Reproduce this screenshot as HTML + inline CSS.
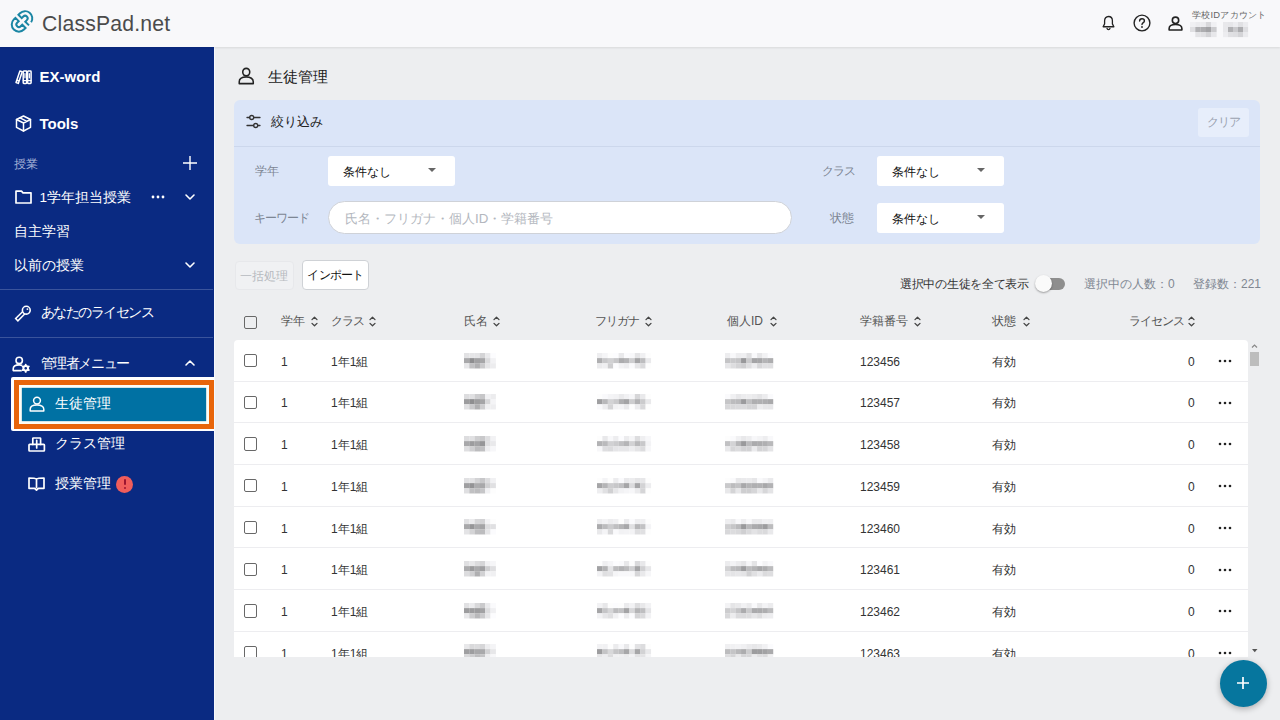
<!DOCTYPE html>
<html lang="ja">
<head>
<meta charset="utf-8">
<title>ClassPad.net</title>
<style>
*{box-sizing:border-box;margin:0;padding:0}
html,body{width:1280px;height:720px;overflow:hidden}
body{font-family:"Liberation Sans",sans-serif;background:#edeef0;color:#222;position:relative;font-size:12px}
.abs{position:absolute}
.t{position:absolute;white-space:nowrap;line-height:20px;height:20px}
svg{position:absolute;overflow:visible}
/* header */
#hdr{position:absolute;left:0;top:0;width:1280px;height:46.6px;background:#f8f8fa;box-shadow:0 1px 2px rgba(0,0,0,.09);z-index:5}
#logo{left:42px;top:10px;font-size:21.2px;line-height:28px;height:28px;color:#4b4b4b;letter-spacing:.2px}
/* sidebar */
#side{overflow:hidden;position:absolute;left:0;top:46px;width:213.6px;height:674px;background:#0a2a82;color:#fff;z-index:3}
#side .t{font-size:13.5px;color:#fff;margin-top:1px;margin-left:-.5px}
#side .b{font-weight:bold;font-size:15px}
.sdiv{position:absolute;left:0;width:213px;height:1px;background:#3a549c}
/* main */
#filter{position:absolute;left:234px;top:100px;width:1026px;height:144px;background:#dbe5f8;border-radius:6px}
.lbl{color:#7d8694;font-size:12px}
.sel{position:absolute;width:127px;height:30px;background:#fff;border-radius:3px}
.sel span{position:absolute;left:15px;top:6px;line-height:20px;font-size:12px;color:#111}
.sel i{position:absolute;left:100.3px;top:11.8px;border-left:4.2px solid transparent;border-right:4.2px solid transparent;border-top:4.6px solid #666}
.btn{position:absolute;height:30px;border-radius:4px;font-size:12px;line-height:28px;text-align:center}
.hd{color:#555;font-size:12px}
#tbl{position:absolute;left:234px;top:340px;width:1014px;height:317px;background:#fff;border-radius:4px 4px 0 0;overflow:hidden}
.row{position:absolute;left:0;width:1015px;height:41.7px;border-bottom:1px solid #ededf0}
.row .t{font-size:12px;color:#333;top:11.8px}
.cb{position:absolute;width:13.4px;height:13.4px;border:1.6px solid #686868;border-radius:2px;background:transparent}
.bl{position:absolute;height:12px;filter:blur(1.5px);background:#bbb}
</style>
</head>
<body>
<div id="hdr">
  <svg style="left:8px;top:8px" width="28" height="28" viewBox="0 0 28 28" fill="none" stroke="#1b86a4" stroke-width="2.05" stroke-linejoin="miter"><g transform="translate(14 13.4) rotate(-45) scale(.97)"><path d="M-2.2 -7.400 L-4.500 -7.400 A7.4 7.4 0 0 0 -4.500 7.400 L-2.200 7.400 L-2.200 2.600 L-4.500 2.600 A2.6 2.6 0 0 1 -4.500 -2.600 L-2.200 -2.600 Z"/><path d="M6.05 7.240 A7.4 7.4 0 0 0 4.500 -7.400 L2.200 -7.400 L2.200 -2.600 L4.500 -2.600 A2.6 2.6 0 0 1 4.500 2.600 L2.200 2.600 L2.200 8"/></g></svg>
  <div class="t" id="logo">ClassPad.net</div>
  <!-- bell -->
  <svg style="left:1102px;top:15px" width="13" height="16" viewBox="0 0 15 18" fill="none" stroke="#222" stroke-width="1.5" stroke-linejoin="round" stroke-linecap="round"><path d="M7.5 1.5 C4.6 1.5 3 3.8 3 6.5 V10 L1.3 13.3 H13.7 L12 10 V6.5 C12 3.8 10.4 1.5 7.5 1.5 Z"/><path d="M5.8 15.2 C6 16.2 6.7 16.6 7.5 16.6 C8.3 16.6 9 16.2 9.2 15.2"/></svg>
  <!-- help -->
  <svg style="left:1133px;top:14px" width="18" height="18" viewBox="0 0 18 18" fill="none" stroke="#222" stroke-width="1.4" stroke-linecap="round"><circle cx="9" cy="9" r="7.9"/><path d="M6.6 7.1 C6.6 5.6 7.6 4.8 9 4.8 C10.4 4.8 11.4 5.7 11.4 6.9 C11.4 8.6 9 8.7 9 10.6"/><circle cx="9" cy="13" r=".9" fill="#222" stroke="none"/></svg>
  <!-- user -->
  <svg style="left:1167.500px;top:15.5px" width="15" height="15" viewBox="0 0 16 16" fill="none" stroke="#222" stroke-width="1.7" stroke-linejoin="round"><circle cx="8" cy="4.6" r="3.4"/><path d="M1.2 15 V13.2 C1.2 10.6 3.8 9 8 9 C12.2 9 14.8 10.6 14.8 13.2 V15 Z"/></svg>
  <div class="t" style="left:1192px;top:8px;font-size:9.4px;letter-spacing:.25px;line-height:14px;height:14px;color:#666">学校IDアカウント</div>
  <svg style="left:1190px;top:21.6px;filter:blur(.5px)" width="26.5" height="15.0" viewBox="0 0 26.5 15.0"><rect x="0.00" y="0.00" width="5.40" height="5.10" fill="#f0f0f3"/><rect x="5.30" y="0.00" width="5.40" height="5.10" fill="#ebebee"/><rect x="10.60" y="0.00" width="5.40" height="5.10" fill="#ececef"/><rect x="15.90" y="0.00" width="5.40" height="5.10" fill="#d8d8db"/><rect x="21.20" y="0.00" width="5.40" height="5.10" fill="#f0f0f3"/><rect x="0.00" y="5.00" width="5.40" height="5.10" fill="#dfdfe2"/><rect x="5.30" y="5.00" width="5.40" height="5.10" fill="#b1b1b4"/><rect x="10.60" y="5.00" width="5.40" height="5.10" fill="#adadb0"/><rect x="15.90" y="5.00" width="5.40" height="5.10" fill="#a3a3a6"/><rect x="21.20" y="5.00" width="5.40" height="5.10" fill="#cbcbce"/><rect x="0.00" y="10.00" width="5.40" height="5.10" fill="#f7f7fa"/><rect x="5.30" y="10.00" width="5.40" height="5.10" fill="#e3e3e6"/><rect x="10.60" y="10.00" width="5.40" height="5.10" fill="#e0e0e3"/><rect x="15.90" y="10.00" width="5.40" height="5.10" fill="#d3d3d6"/><rect x="21.20" y="10.00" width="5.40" height="5.10" fill="#e7e7ea"/></svg>
  <svg style="left:1223px;top:21.6px;filter:blur(.5px)" width="25.0" height="15.0" viewBox="0 0 25.0 15.0"><rect x="0.00" y="0.00" width="5.10" height="5.10" fill="#e8e8eb"/><rect x="5.00" y="0.00" width="5.10" height="5.10" fill="#e6e6e9"/><rect x="10.00" y="0.00" width="5.10" height="5.10" fill="#ededf0"/><rect x="15.00" y="0.00" width="5.10" height="5.10" fill="#e0e0e3"/><rect x="20.00" y="0.00" width="5.10" height="5.10" fill="#ebebee"/><rect x="0.00" y="5.00" width="5.10" height="5.10" fill="#e8e8eb"/><rect x="5.00" y="5.00" width="5.10" height="5.10" fill="#b1b1b4"/><rect x="10.00" y="5.00" width="5.10" height="5.10" fill="#cacacd"/><rect x="15.00" y="5.00" width="5.10" height="5.10" fill="#acacaf"/><rect x="20.00" y="5.00" width="5.10" height="5.10" fill="#dedee1"/><rect x="0.00" y="10.00" width="5.10" height="5.10" fill="#ececef"/><rect x="5.00" y="10.00" width="5.10" height="5.10" fill="#e0e0e3"/><rect x="10.00" y="10.00" width="5.10" height="5.10" fill="#dedee1"/><rect x="15.00" y="10.00" width="5.10" height="5.10" fill="#d4d4d7"/><rect x="20.00" y="10.00" width="5.10" height="5.10" fill="#eaeaed"/></svg>
</div>
<div id="side">
  <!-- EX-word -->
  <svg style="left:15px;top:23.6px" width="17" height="14.4" viewBox="0 0 17 14.4" fill="none" stroke="#fff" stroke-width="1.5" stroke-linejoin="round" stroke-linecap="round"><path d="M1 12.6 L4.9 1 L7.2 1.800 L3.3 13.400 Z M1.9 10.2 L4.1 11"/><rect x="8.2" y="1" width="3.5" height="12.4" rx=".7"/><rect x="12.6" y="1" width="3.5" height="12.4" rx=".7"/><path d="M8.2 10.6 H11.7 M12.6 10.6 H16.1 M9.95 3.6 V7.8 M14.35 3.6 V7.8" stroke-width="1.2"/></svg>
  <div class="t b" style="left:40px;top:20px">EX-word</div>
  <!-- Tools -->
  <svg style="left:15px;top:69px" width="17" height="17" viewBox="0 0 17 17" fill="none" stroke="#fff" stroke-width="1.5" stroke-linejoin="round" stroke-linecap="round"><path d="M8.5 1 L15.5 4.5 V12.3 L8.5 16 L1.5 12.3 V4.5 Z"/><path d="M1.5 4.5 L8.5 8 L15.5 4.5 M8.5 8 V16 M5 2.8 L12 6.3"/></svg>
  <div class="t b" style="left:40px;top:67px">Tools</div>
  <!-- jugyo -->
  <div class="t" style="left:14px;top:107px;font-size:12px;color:#a5b1d6">授業</div>
  <svg style="left:182px;top:109px" width="16" height="16" viewBox="0 0 16 16" fill="none" stroke="#fff" stroke-width="1.4"><path d="M8 1v14M1 8h14"/></svg>
  <svg style="left:15px;top:144px" width="17" height="14" viewBox="0 0 17 14" fill="none" stroke="#fff" stroke-width="1.7" stroke-linejoin="round"><path d="M1 1.2 H6.5 L8 2.8 H16 V13 H1 Z"/></svg>
  <div class="t" style="left:40px;top:141px">1学年担当授業</div>
  <svg style="left:151px;top:149px" width="14" height="4" viewBox="0 0 14 4" fill="#fff"><circle cx="2" cy="2" r="1.4"/><circle cx="7" cy="2" r="1.4"/><circle cx="12" cy="2" r="1.4"/></svg>
  <svg style="left:185px;top:148px" width="10" height="6" viewBox="0 0 10 6" fill="none" stroke="#fff" stroke-width="1.6" stroke-linecap="round" stroke-linejoin="round"><path d="M1 1l4 4 4-4"/></svg>
  <div class="t" style="left:14px;top:175px">自主学習</div>
  <div class="t" style="left:14px;top:209px">以前の授業</div>
  <svg style="left:185px;top:216px" width="10" height="6" viewBox="0 0 10 6" fill="none" stroke="#fff" stroke-width="1.6" stroke-linecap="round" stroke-linejoin="round"><path d="M1 1l4 4 4-4"/></svg>
  <div class="sdiv" style="top:243px"></div>
  <!-- license -->
  <svg style="left:15px;top:259.4px" width="17" height="16" viewBox="0 0 17 16" fill="none" stroke-linecap="square"><path d="M7.8 8.7 L2.9 13.6" stroke="#fff" stroke-width="4.7"/><path d="M7.8 8.7 L2.9 13.6" stroke="#0a2a82" stroke-width="1.7"/><circle cx="11.3" cy="5.2" r="3.9" fill="#0a2a82" stroke="#fff" stroke-width="1.6"/><circle cx="12.4" cy="4.1" r=".95" fill="#fff"/></svg>
  <div class="t" style="left:41px;top:256px;letter-spacing:-1.5px">あなたのライセンス</div>
  <div class="sdiv" style="top:291px"></div>
  <!-- admin -->
  <svg style="left:12px;top:309.5px" width="20" height="17" viewBox="0 0 20 17" fill="none" stroke="#fff" stroke-width="1.6" stroke-linecap="round" stroke-linejoin="round"><circle cx="7.2" cy="4.4" r="3.2"/><path d="M9.5 14.6 H1.200 V13 C1.2 10.400 3.5 8.9 7.200 8.900 C8.400 8.900 9.4 9.1 10.200 9.400"/><circle cx="13.700" cy="12.300" r="4.6" fill="#0a2a82" stroke="none"/><circle cx="13.7" cy="12.3" r="2.3" stroke-width="2"/><path d="M13.7 8.7v.9M13.700 15v.9M10.600 10.500l.8.450M16 13.650l.8.450M10.600 14.100l.800-.450M16 10.950l.800-.450" stroke-width="1.9"/><circle cx="13.700" cy="12.300" r=".9" fill="#0a2a82" stroke="none"/></svg>
  <div class="t" style="left:41px;top:307px;letter-spacing:-1.4px">管理者メニュー</div>
  <svg style="left:185px;top:314px" width="10" height="6" viewBox="0 0 10 6" fill="none" stroke="#fff" stroke-width="1.6" stroke-linecap="round" stroke-linejoin="round"><path d="M1 5l4-4 4 4"/></svg>
  <!-- selected -->
  <div class="abs" style="left:11px;top:331.3px;width:210px;height:54px;background:#fff;border-radius:2px"></div>
  <div class="abs" style="left:13.8px;top:333.8px;width:205px;height:49.2px;background:#e8650a"></div>
  <div class="abs" style="left:19px;top:339px;width:190.3px;height:38.5px;background:#fdfdf6"></div>
  <div class="abs" style="left:21.6px;top:341.6px;width:184.8px;height:33.2px;background:#0071a3;box-shadow:0 0 1px #0071a3"></div>
  <svg style="left:29px;top:350px" width="16" height="16" viewBox="0 0 16 16" fill="none" stroke="#fff" stroke-width="1.5" stroke-linejoin="round"><circle cx="8" cy="4.6" r="3.4"/><path d="M1.2 15 V13.2 C1.2 10.6 3.8 9 8 9 C12.2 9 14.8 10.6 14.8 13.2 V15 Z"/></svg>
  <div class="t" style="left:55px;top:347px">生徒管理</div>
  <!-- class -->
  <svg style="left:28px;top:390.6px" width="17.4" height="15" viewBox="0 0 17.4 15" fill="none" stroke="#fff" stroke-width="1.7" stroke-linejoin="round" stroke-linecap="round"><path d="M4.800 7.400 V1.600 A.6 .6 0 0 1 5.400 1 H12 A.6 .6 0 0 1 12.600 1.600 V7.400"/><rect x="1" y="7.4" width="15.4" height="6.600" rx=".7"/><path d="M8.700 3.400 V11"/></svg>
  <div class="t" style="left:55px;top:387px">クラス管理</div>
  <!-- lesson -->
  <svg style="left:28.300px;top:431px" width="17" height="14.6" viewBox="0 0 17 14.600" fill="none" stroke="#fff" stroke-width="1.7" stroke-linejoin="round"><path d="M8.500 2 C7.500 1.300 6 1 1 1 V11.300 H6.600 L8.500 13.200 L10.400 11.300 H16 V1 C11 1 9.500 1.300 8.500 2 V11.300"/></svg>
  <div class="t" style="left:55px;top:427px">授業管理</div>
  <div class="abs" style="left:116.400px;top:429.600px;width:17px;height:17px;border-radius:50%;background:#f05d5b"></div>
  <div class="abs" style="left:123.800px;top:433px;width:2.200px;height:6.400px;background:#9c1530;border-radius:1px"></div>
  <div class="abs" style="left:123.700px;top:440.600px;width:2.400px;height:2.400px;background:#9c1530;border-radius:50%"></div>
</div>
<div id="main">
  <div class="abs" style="left:213.6px;top:46px;width:1.5px;height:674px;background:#f6f8fc"></div>
  <svg style="left:237.600px;top:66.900px" width="16.500" height="17.800" viewBox="0 0 16 16" preserveAspectRatio="none" fill="none" stroke="#222" stroke-width="1.5" stroke-linejoin="round"><circle cx="8" cy="4.6" r="3.4"/><path d="M1.2 15 V13.2 C1.2 10.6 3.8 9 8 9 C12.2 9 14.8 10.6 14.800 13.2 V15 Z"/></svg>
  <div class="t" style="left:268px;top:66px;font-size:15.2px;line-height:22px;height:22px;color:#222">生徒管理</div>
  <div id="filter">
    <svg style="left:12.300px;top:15.300px" width="15" height="13" viewBox="0 0 15 13" fill="none" stroke="#333" stroke-width="1.3" stroke-linecap="round"><path d="M1 2.500 H3.600 M7.800 2.500 H14 M1 10.500 H7.600 M11.800 10.500 H14"/><circle cx="5.700" cy="2.500" r="2"/><circle cx="9.700" cy="10.500" r="2"/></svg>
    <div class="t" style="left:37px;top:12px;font-size:13.3px;color:#222">絞り込み</div>
    <div class="btn" style="left:964px;top:8px;width:51px;height:29px;background:#e7eefb;color:#9aa2b0;line-height:29px;border-radius:3px;letter-spacing:-1px">クリア</div>
    <div class="abs" style="left:0;top:46px;width:1026px;height:1px;background:#ccd7ec"></div>
    <div class="t lbl" style="left:21px;top:61px">学年</div>
    <div class="sel" style="left:94px;top:56px"><span>条件なし</span><i></i></div>
    <div class="t lbl" style="left:588px;top:61px;letter-spacing:-1px">クラス</div>
    <div class="sel" style="left:643px;top:56px"><span>条件なし</span><i></i></div>
    <div class="t lbl" style="left:20px;top:108px;letter-spacing:-1px">キーワード</div>
    <div class="abs" style="left:93.6px;top:101px;width:464.6px;height:33.3px;background:#fff;border:1px solid #cfd2d8;border-radius:17px"></div>
    <div class="t" style="left:111px;top:108.6px;font-size:13.3px;color:#b3b7be">氏名・フリガナ・個人ID・学籍番号</div>
    <div class="t lbl" style="left:596px;top:108px">状態</div>
    <div class="sel" style="left:643px;top:103px"><span>条件なし</span><i></i></div>
  </div>
  <div class="btn" style="left:235px;top:260.5px;width:59px;height:29.5px;background:#f0f1f3;color:#b7babf;border:1px solid #e7e8eb;text-indent:-1px">一括処理</div>
  <div class="btn" style="left:302px;top:260px;width:67px;background:#fff;color:#111;border:1px solid #cfd2d6;letter-spacing:-.8px">インポート</div>
  <div class="t" style="left:900px;top:274px;font-size:12px;color:#333;letter-spacing:-.28px">選択中の生徒を全て表示</div>
  <div class="abs" style="left:1037px;top:278px;width:28px;height:12px;border-radius:6px;background:#8e8e8e"></div>
  <div class="abs" style="left:1035px;top:275px;width:17px;height:17px;border-radius:50%;background:#fafafa;box-shadow:0 1px 2px rgba(0,0,0,.35)"></div>
  <div class="t" style="left:1084px;top:274px;font-size:12px;color:#808792">選択中の人数：0</div>
  <div class="t" style="left:1193px;top:274px;font-size:12px;color:#808792">登録数：221</div>
  <div class="cb" style="left:244px;top:315.7px"></div>
  <div class="t hd" style="left:281px;top:310.6px">学年</div><svg style="left:311px;top:315.6px" width="7" height="11" viewBox="0 0 7 11" fill="none" stroke="#444" stroke-width="1.3" stroke-linecap="round" stroke-linejoin="round"><path d="M1 3.6 L3.5 1.2 L6 3.6 M1 7.4 L3.500 9.8 L6 7.4"/></svg><div class="t hd" style="left:331px;top:310.6px;letter-spacing:-1px">クラス</div><svg style="left:369px;top:315.6px" width="7" height="11" viewBox="0 0 7 11" fill="none" stroke="#444" stroke-width="1.3" stroke-linecap="round" stroke-linejoin="round"><path d="M1 3.6 L3.5 1.2 L6 3.6 M1 7.4 L3.500 9.8 L6 7.4"/></svg><div class="t hd" style="left:464px;top:310.6px">氏名</div><svg style="left:493px;top:315.6px" width="7" height="11" viewBox="0 0 7 11" fill="none" stroke="#444" stroke-width="1.3" stroke-linecap="round" stroke-linejoin="round"><path d="M1 3.6 L3.5 1.2 L6 3.6 M1 7.4 L3.500 9.8 L6 7.4"/></svg><div class="t hd" style="left:595px;top:310.6px;letter-spacing:-1px">フリガナ</div><svg style="left:645px;top:315.6px" width="7" height="11" viewBox="0 0 7 11" fill="none" stroke="#444" stroke-width="1.3" stroke-linecap="round" stroke-linejoin="round"><path d="M1 3.6 L3.5 1.2 L6 3.6 M1 7.4 L3.500 9.8 L6 7.4"/></svg><div class="t hd" style="left:727px;top:310.6px">個人ID</div><svg style="left:770px;top:315.6px" width="7" height="11" viewBox="0 0 7 11" fill="none" stroke="#444" stroke-width="1.3" stroke-linecap="round" stroke-linejoin="round"><path d="M1 3.6 L3.5 1.2 L6 3.6 M1 7.4 L3.500 9.8 L6 7.4"/></svg><div class="t hd" style="left:860px;top:310.6px">学籍番号</div><svg style="left:914px;top:315.6px" width="7" height="11" viewBox="0 0 7 11" fill="none" stroke="#444" stroke-width="1.3" stroke-linecap="round" stroke-linejoin="round"><path d="M1 3.6 L3.5 1.2 L6 3.6 M1 7.4 L3.500 9.8 L6 7.4"/></svg><div class="t hd" style="left:992px;top:310.6px">状態</div><svg style="left:1023px;top:315.6px" width="7" height="11" viewBox="0 0 7 11" fill="none" stroke="#444" stroke-width="1.3" stroke-linecap="round" stroke-linejoin="round"><path d="M1 3.6 L3.5 1.2 L6 3.6 M1 7.4 L3.500 9.8 L6 7.4"/></svg><div class="t hd" style="left:1129px;top:310.6px;letter-spacing:-1px">ライセンス</div><svg style="left:1188px;top:315.6px" width="7" height="11" viewBox="0 0 7 11" fill="none" stroke="#444" stroke-width="1.3" stroke-linecap="round" stroke-linejoin="round"><path d="M1 3.6 L3.5 1.2 L6 3.6 M1 7.4 L3.500 9.8 L6 7.4"/></svg>
  <div id="tbl">
<div class="row" style="top:0.0px">
  <div class="cb" style="left:10px;top:14px"></div>
  <div class="t" style="left:47px">1</div><div class="t" style="left:97px">1年1組</div>
  <svg style="left:230.2px;top:12.6px;filter:blur(.5px)" width="31.8" height="15.4" viewBox="0 0 31.8 15.4"><rect x="0.00" y="0.00" width="5.40" height="5.23" fill="#e2e2e4"/><rect x="5.30" y="0.00" width="5.40" height="5.23" fill="#e5e5e7"/><rect x="10.60" y="0.00" width="5.40" height="5.23" fill="#e4e4e6"/><rect x="15.90" y="0.00" width="5.40" height="5.23" fill="#d4d4d6"/><rect x="21.20" y="0.00" width="5.40" height="5.23" fill="#eaeaec"/><rect x="26.50" y="0.00" width="5.40" height="5.23" fill="#fcfcfe"/><rect x="0.00" y="5.13" width="5.40" height="5.23" fill="#a8a8aa"/><rect x="5.30" y="5.13" width="5.40" height="5.23" fill="#8e8e90"/><rect x="10.60" y="5.13" width="5.40" height="5.23" fill="#a1a1a3"/><rect x="15.90" y="5.13" width="5.40" height="5.23" fill="#a6a6a8"/><rect x="21.20" y="5.13" width="5.40" height="5.23" fill="#dbdbdd"/><rect x="26.50" y="5.13" width="5.40" height="5.23" fill="#f2f2f4"/><rect x="0.00" y="10.26" width="5.40" height="5.23" fill="#e7e7e9"/><rect x="5.30" y="10.26" width="5.40" height="5.23" fill="#c1c1c3"/><rect x="10.60" y="10.26" width="5.40" height="5.23" fill="#b1b1b3"/><rect x="15.90" y="10.26" width="5.40" height="5.23" fill="#cacacc"/><rect x="21.20" y="10.26" width="5.40" height="5.23" fill="#e5e5e7"/><rect x="26.50" y="10.26" width="5.40" height="5.23" fill="#ececee"/></svg><svg style="left:363.1px;top:12.6px;filter:blur(.5px)" width="54.0" height="15.4" viewBox="0 0 54.0 15.4"><rect x="0.00" y="0.00" width="5.50" height="5.23" fill="#eeeef0"/><rect x="5.40" y="0.00" width="5.50" height="5.23" fill="#f5f5f7"/><rect x="10.80" y="0.00" width="5.50" height="5.23" fill="#fdfdfd"/><rect x="16.20" y="0.00" width="5.50" height="5.23" fill="#fcfcfe"/><rect x="21.60" y="0.00" width="5.50" height="5.23" fill="#e9e9eb"/><rect x="27.00" y="0.00" width="5.50" height="5.23" fill="#fbfbfd"/><rect x="32.40" y="0.00" width="5.50" height="5.23" fill="#f8f8fa"/><rect x="37.80" y="0.00" width="5.50" height="5.23" fill="#e4e4e6"/><rect x="43.20" y="0.00" width="5.50" height="5.23" fill="#f0f0f2"/><rect x="48.60" y="0.00" width="5.50" height="5.23" fill="#fdfdfd"/><rect x="0.00" y="5.13" width="5.50" height="5.23" fill="#afafb1"/><rect x="5.40" y="5.13" width="5.50" height="5.23" fill="#c8c8ca"/><rect x="10.80" y="5.13" width="5.50" height="5.23" fill="#d1d1d3"/><rect x="16.20" y="5.13" width="5.50" height="5.23" fill="#c7c7c9"/><rect x="21.60" y="5.13" width="5.50" height="5.23" fill="#acacae"/><rect x="27.00" y="5.13" width="5.50" height="5.23" fill="#b4b4b6"/><rect x="32.40" y="5.13" width="5.50" height="5.23" fill="#ceced0"/><rect x="37.80" y="5.13" width="5.50" height="5.23" fill="#a5a5a7"/><rect x="43.20" y="5.13" width="5.50" height="5.23" fill="#bdbdbf"/><rect x="48.60" y="5.13" width="5.50" height="5.23" fill="#eaeaec"/><rect x="0.00" y="10.26" width="5.50" height="5.23" fill="#ebebed"/><rect x="5.40" y="10.26" width="5.50" height="5.23" fill="#efeff1"/><rect x="10.80" y="10.26" width="5.50" height="5.23" fill="#ceced0"/><rect x="16.20" y="10.26" width="5.50" height="5.23" fill="#fcfcfe"/><rect x="21.60" y="10.26" width="5.50" height="5.23" fill="#f2f2f4"/><rect x="27.00" y="10.26" width="5.50" height="5.23" fill="#eeeef0"/><rect x="32.40" y="10.26" width="5.50" height="5.23" fill="#fafafc"/><rect x="37.80" y="10.26" width="5.50" height="5.23" fill="#e6e6e8"/><rect x="43.20" y="10.26" width="5.50" height="5.23" fill="#dadadc"/><rect x="48.60" y="10.26" width="5.50" height="5.23" fill="#fdfdfd"/></svg><svg style="left:491.4px;top:12.6px;filter:blur(.5px)" width="48.1" height="15.4" viewBox="0 0 48.1 15.4"><rect x="0.00" y="0.00" width="5.45" height="5.23" fill="#ededef"/><rect x="5.35" y="0.00" width="5.45" height="5.23" fill="#f8f8fa"/><rect x="10.70" y="0.00" width="5.45" height="5.23" fill="#ededef"/><rect x="16.05" y="0.00" width="5.45" height="5.23" fill="#efeff1"/><rect x="21.40" y="0.00" width="5.45" height="5.23" fill="#e0e0e2"/><rect x="26.75" y="0.00" width="5.45" height="5.23" fill="#f9f9fb"/><rect x="32.10" y="0.00" width="5.45" height="5.23" fill="#e6e6e8"/><rect x="37.45" y="0.00" width="5.45" height="5.23" fill="#f2f2f4"/><rect x="42.80" y="0.00" width="5.45" height="5.23" fill="#fcfcfe"/><rect x="0.00" y="5.13" width="5.45" height="5.23" fill="#c4c4c6"/><rect x="5.35" y="5.13" width="5.45" height="5.23" fill="#c9c9cb"/><rect x="10.70" y="5.13" width="5.45" height="5.23" fill="#c5c5c7"/><rect x="16.05" y="5.13" width="5.45" height="5.23" fill="#98989a"/><rect x="21.40" y="5.13" width="5.45" height="5.23" fill="#cacacc"/><rect x="26.75" y="5.13" width="5.45" height="5.23" fill="#a4a4a6"/><rect x="32.10" y="5.13" width="5.45" height="5.23" fill="#a6a6a8"/><rect x="37.45" y="5.13" width="5.45" height="5.23" fill="#b4b4b6"/><rect x="42.80" y="5.13" width="5.45" height="5.23" fill="#adadaf"/><rect x="0.00" y="10.26" width="5.45" height="5.23" fill="#e6e6e8"/><rect x="5.35" y="10.26" width="5.45" height="5.23" fill="#dddddf"/><rect x="10.70" y="10.26" width="5.45" height="5.23" fill="#d4d4d6"/><rect x="16.05" y="10.26" width="5.45" height="5.23" fill="#ceced0"/><rect x="21.40" y="10.26" width="5.45" height="5.23" fill="#dedee0"/><rect x="26.75" y="10.26" width="5.45" height="5.23" fill="#ececee"/><rect x="32.10" y="10.26" width="5.45" height="5.23" fill="#d7d7d9"/><rect x="37.45" y="10.26" width="5.45" height="5.23" fill="#e0e0e2"/><rect x="42.80" y="10.26" width="5.45" height="5.23" fill="#dfdfe1"/></svg>
  <div class="t" style="left:626px">123456</div><div class="t" style="left:758px">有効</div>
  <div class="t" style="left:954px">0</div>
  <svg style="left:984px;top:19px" width="14" height="4" viewBox="0 0 14 4" fill="#222"><circle cx="2" cy="2" r="1.3"/><circle cx="7" cy="2" r="1.3"/><circle cx="12" cy="2" r="1.3"/></svg>
</div>
<div class="row" style="top:41.7px">
  <div class="cb" style="left:10px;top:14px"></div>
  <div class="t" style="left:47px">1</div><div class="t" style="left:97px">1年1組</div>
  <svg style="left:230.2px;top:12.6px;filter:blur(.5px)" width="31.8" height="15.4" viewBox="0 0 31.8 15.4"><rect x="0.00" y="0.00" width="5.40" height="5.23" fill="#dddddf"/><rect x="5.30" y="0.00" width="5.40" height="5.23" fill="#e0e0e2"/><rect x="10.60" y="0.00" width="5.40" height="5.23" fill="#ceced0"/><rect x="15.90" y="0.00" width="5.40" height="5.23" fill="#c6c6c8"/><rect x="21.20" y="0.00" width="5.40" height="5.23" fill="#f1f1f3"/><rect x="26.50" y="0.00" width="5.40" height="5.23" fill="#ececee"/><rect x="0.00" y="5.13" width="5.40" height="5.23" fill="#9c9c9e"/><rect x="5.30" y="5.13" width="5.40" height="5.23" fill="#8e8e90"/><rect x="10.60" y="5.13" width="5.40" height="5.23" fill="#9d9d9f"/><rect x="15.90" y="5.13" width="5.40" height="5.23" fill="#a5a5a7"/><rect x="21.20" y="5.13" width="5.40" height="5.23" fill="#d8d8da"/><rect x="26.50" y="5.13" width="5.40" height="5.23" fill="#f4f4f6"/><rect x="0.00" y="10.26" width="5.40" height="5.23" fill="#e0e0e2"/><rect x="5.30" y="10.26" width="5.40" height="5.23" fill="#c9c9cb"/><rect x="10.60" y="10.26" width="5.40" height="5.23" fill="#b0b0b2"/><rect x="15.90" y="10.26" width="5.40" height="5.23" fill="#ceced0"/><rect x="21.20" y="10.26" width="5.40" height="5.23" fill="#f0f0f2"/><rect x="26.50" y="10.26" width="5.40" height="5.23" fill="#eeeef0"/></svg><svg style="left:363.1px;top:12.6px;filter:blur(.5px)" width="54.0" height="15.4" viewBox="0 0 54.0 15.4"><rect x="0.00" y="0.00" width="5.50" height="5.23" fill="#fdfdfd"/><rect x="5.40" y="0.00" width="5.50" height="5.23" fill="#f9f9fb"/><rect x="10.80" y="0.00" width="5.50" height="5.23" fill="#f4f4f6"/><rect x="16.20" y="0.00" width="5.50" height="5.23" fill="#f2f2f4"/><rect x="21.60" y="0.00" width="5.50" height="5.23" fill="#eaeaec"/><rect x="27.00" y="0.00" width="5.50" height="5.23" fill="#f1f1f3"/><rect x="32.40" y="0.00" width="5.50" height="5.23" fill="#f6f6f8"/><rect x="37.80" y="0.00" width="5.50" height="5.23" fill="#d6d6d8"/><rect x="43.20" y="0.00" width="5.50" height="5.23" fill="#e9e9eb"/><rect x="48.60" y="0.00" width="5.50" height="5.23" fill="#fdfdfd"/><rect x="0.00" y="5.13" width="5.50" height="5.23" fill="#9f9fa1"/><rect x="5.40" y="5.13" width="5.50" height="5.23" fill="#b8b8ba"/><rect x="10.80" y="5.13" width="5.50" height="5.23" fill="#d3d3d5"/><rect x="16.20" y="5.13" width="5.50" height="5.23" fill="#cacacc"/><rect x="21.60" y="5.13" width="5.50" height="5.23" fill="#afafb1"/><rect x="27.00" y="5.13" width="5.50" height="5.23" fill="#a4a4a6"/><rect x="32.40" y="5.13" width="5.50" height="5.23" fill="#cdcdcf"/><rect x="37.80" y="5.13" width="5.50" height="5.23" fill="#b2b2b4"/><rect x="43.20" y="5.13" width="5.50" height="5.23" fill="#cbcbcd"/><rect x="48.60" y="5.13" width="5.50" height="5.23" fill="#e9e9eb"/><rect x="0.00" y="10.26" width="5.50" height="5.23" fill="#f9f9fb"/><rect x="5.40" y="10.26" width="5.50" height="5.23" fill="#ededef"/><rect x="10.80" y="10.26" width="5.50" height="5.23" fill="#d4d4d6"/><rect x="16.20" y="10.26" width="5.50" height="5.23" fill="#f2f2f4"/><rect x="21.60" y="10.26" width="5.50" height="5.23" fill="#f4f4f6"/><rect x="27.00" y="10.26" width="5.50" height="5.23" fill="#eaeaec"/><rect x="32.40" y="10.26" width="5.50" height="5.23" fill="#fdfdfd"/><rect x="37.80" y="10.26" width="5.50" height="5.23" fill="#ececee"/><rect x="43.20" y="10.26" width="5.50" height="5.23" fill="#d8d8da"/><rect x="48.60" y="10.26" width="5.50" height="5.23" fill="#fdfdfd"/></svg><svg style="left:491.4px;top:12.6px;filter:blur(.5px)" width="48.1" height="15.4" viewBox="0 0 48.1 15.4"><rect x="0.00" y="0.00" width="5.45" height="5.23" fill="#fafafc"/><rect x="5.35" y="0.00" width="5.45" height="5.23" fill="#f0f0f2"/><rect x="10.70" y="0.00" width="5.45" height="5.23" fill="#e7e7e9"/><rect x="16.05" y="0.00" width="5.45" height="5.23" fill="#ececee"/><rect x="21.40" y="0.00" width="5.45" height="5.23" fill="#ededef"/><rect x="26.75" y="0.00" width="5.45" height="5.23" fill="#eaeaec"/><rect x="32.10" y="0.00" width="5.45" height="5.23" fill="#e4e4e6"/><rect x="37.45" y="0.00" width="5.45" height="5.23" fill="#ececee"/><rect x="42.80" y="0.00" width="5.45" height="5.23" fill="#fafafc"/><rect x="0.00" y="5.13" width="5.45" height="5.23" fill="#c5c5c7"/><rect x="5.35" y="5.13" width="5.45" height="5.23" fill="#bcbcbe"/><rect x="10.70" y="5.13" width="5.45" height="5.23" fill="#bababc"/><rect x="16.05" y="5.13" width="5.45" height="5.23" fill="#9b9b9d"/><rect x="21.40" y="5.13" width="5.45" height="5.23" fill="#c0c0c2"/><rect x="26.75" y="5.13" width="5.45" height="5.23" fill="#afafb1"/><rect x="32.10" y="5.13" width="5.45" height="5.23" fill="#b0b0b2"/><rect x="37.45" y="5.13" width="5.45" height="5.23" fill="#aeaeb0"/><rect x="42.80" y="5.13" width="5.45" height="5.23" fill="#a9a9ab"/><rect x="0.00" y="10.26" width="5.45" height="5.23" fill="#d7d7d9"/><rect x="5.35" y="10.26" width="5.45" height="5.23" fill="#d8d8da"/><rect x="10.70" y="10.26" width="5.45" height="5.23" fill="#dadadc"/><rect x="16.05" y="10.26" width="5.45" height="5.23" fill="#dadadc"/><rect x="21.40" y="10.26" width="5.45" height="5.23" fill="#d4d4d6"/><rect x="26.75" y="10.26" width="5.45" height="5.23" fill="#d4d4d6"/><rect x="32.10" y="10.26" width="5.45" height="5.23" fill="#ececee"/><rect x="37.45" y="10.26" width="5.45" height="5.23" fill="#e7e7e9"/><rect x="42.80" y="10.26" width="5.45" height="5.23" fill="#e6e6e8"/></svg>
  <div class="t" style="left:626px">123457</div><div class="t" style="left:758px">有効</div>
  <div class="t" style="left:954px">0</div>
  <svg style="left:984px;top:19px" width="14" height="4" viewBox="0 0 14 4" fill="#222"><circle cx="2" cy="2" r="1.3"/><circle cx="7" cy="2" r="1.3"/><circle cx="12" cy="2" r="1.3"/></svg>
</div>
<div class="row" style="top:83.4px">
  <div class="cb" style="left:10px;top:14px"></div>
  <div class="t" style="left:47px">1</div><div class="t" style="left:97px">1年1組</div>
  <svg style="left:230.2px;top:12.6px;filter:blur(.5px)" width="31.8" height="15.4" viewBox="0 0 31.8 15.4"><rect x="0.00" y="0.00" width="5.40" height="5.23" fill="#dddddf"/><rect x="5.30" y="0.00" width="5.40" height="5.23" fill="#e0e0e2"/><rect x="10.60" y="0.00" width="5.40" height="5.23" fill="#ceced0"/><rect x="15.90" y="0.00" width="5.40" height="5.23" fill="#c8c8ca"/><rect x="21.20" y="0.00" width="5.40" height="5.23" fill="#dedee0"/><rect x="26.50" y="0.00" width="5.40" height="5.23" fill="#f2f2f4"/><rect x="0.00" y="5.13" width="5.40" height="5.23" fill="#a8a8aa"/><rect x="5.30" y="5.13" width="5.40" height="5.23" fill="#9c9c9e"/><rect x="10.60" y="5.13" width="5.40" height="5.23" fill="#a3a3a5"/><rect x="15.90" y="5.13" width="5.40" height="5.23" fill="#969698"/><rect x="21.20" y="5.13" width="5.40" height="5.23" fill="#dfdfe1"/><rect x="26.50" y="5.13" width="5.40" height="5.23" fill="#e9e9eb"/><rect x="0.00" y="10.26" width="5.40" height="5.23" fill="#dfdfe1"/><rect x="5.30" y="10.26" width="5.40" height="5.23" fill="#cfcfd1"/><rect x="10.60" y="10.26" width="5.40" height="5.23" fill="#bcbcbe"/><rect x="15.90" y="10.26" width="5.40" height="5.23" fill="#c0c0c2"/><rect x="21.20" y="10.26" width="5.40" height="5.23" fill="#eeeef0"/><rect x="26.50" y="10.26" width="5.40" height="5.23" fill="#f7f7f9"/></svg><svg style="left:363.1px;top:12.6px;filter:blur(.5px)" width="54.0" height="15.4" viewBox="0 0 54.0 15.4"><rect x="0.00" y="0.00" width="5.50" height="5.23" fill="#fdfdfd"/><rect x="5.40" y="0.00" width="5.50" height="5.23" fill="#e8e8ea"/><rect x="10.80" y="0.00" width="5.50" height="5.23" fill="#f8f8fa"/><rect x="16.20" y="0.00" width="5.50" height="5.23" fill="#ededef"/><rect x="21.60" y="0.00" width="5.50" height="5.23" fill="#fcfcfe"/><rect x="27.00" y="0.00" width="5.50" height="5.23" fill="#ececee"/><rect x="32.40" y="0.00" width="5.50" height="5.23" fill="#f5f5f7"/><rect x="37.80" y="0.00" width="5.50" height="5.23" fill="#dddddf"/><rect x="43.20" y="0.00" width="5.50" height="5.23" fill="#efeff1"/><rect x="48.60" y="0.00" width="5.50" height="5.23" fill="#f7f7f9"/><rect x="0.00" y="5.13" width="5.50" height="5.23" fill="#b3b3b5"/><rect x="5.40" y="5.13" width="5.50" height="5.23" fill="#bababc"/><rect x="10.80" y="5.13" width="5.50" height="5.23" fill="#d1d1d3"/><rect x="16.20" y="5.13" width="5.50" height="5.23" fill="#cbcbcd"/><rect x="21.60" y="5.13" width="5.50" height="5.23" fill="#c0c0c2"/><rect x="27.00" y="5.13" width="5.50" height="5.23" fill="#b5b5b7"/><rect x="32.40" y="5.13" width="5.50" height="5.23" fill="#d2d2d4"/><rect x="37.80" y="5.13" width="5.50" height="5.23" fill="#b9b9bb"/><rect x="43.20" y="5.13" width="5.50" height="5.23" fill="#c8c8ca"/><rect x="48.60" y="5.13" width="5.50" height="5.23" fill="#f3f3f5"/><rect x="0.00" y="10.26" width="5.50" height="5.23" fill="#f7f7f9"/><rect x="5.40" y="10.26" width="5.50" height="5.23" fill="#dedee0"/><rect x="10.80" y="10.26" width="5.50" height="5.23" fill="#dbdbdd"/><rect x="16.20" y="10.26" width="5.50" height="5.23" fill="#e5e5e7"/><rect x="21.60" y="10.26" width="5.50" height="5.23" fill="#e7e7e9"/><rect x="27.00" y="10.26" width="5.50" height="5.23" fill="#e7e7e9"/><rect x="32.40" y="10.26" width="5.50" height="5.23" fill="#ededef"/><rect x="37.80" y="10.26" width="5.50" height="5.23" fill="#e4e4e6"/><rect x="43.20" y="10.26" width="5.50" height="5.23" fill="#dcdcde"/><rect x="48.60" y="10.26" width="5.50" height="5.23" fill="#f7f7f9"/></svg><svg style="left:491.4px;top:12.6px;filter:blur(.5px)" width="48.1" height="15.4" viewBox="0 0 48.1 15.4"><rect x="0.00" y="0.00" width="5.45" height="5.23" fill="#fdfdfd"/><rect x="5.35" y="0.00" width="5.45" height="5.23" fill="#fafafc"/><rect x="10.70" y="0.00" width="5.45" height="5.23" fill="#f0f0f2"/><rect x="16.05" y="0.00" width="5.45" height="5.23" fill="#e8e8ea"/><rect x="21.40" y="0.00" width="5.45" height="5.23" fill="#ededef"/><rect x="26.75" y="0.00" width="5.45" height="5.23" fill="#f7f7f9"/><rect x="32.10" y="0.00" width="5.45" height="5.23" fill="#f3f3f5"/><rect x="37.45" y="0.00" width="5.45" height="5.23" fill="#ededef"/><rect x="42.80" y="0.00" width="5.45" height="5.23" fill="#f8f8fa"/><rect x="0.00" y="5.13" width="5.45" height="5.23" fill="#c1c1c3"/><rect x="5.35" y="5.13" width="5.45" height="5.23" fill="#d3d3d5"/><rect x="10.70" y="5.13" width="5.45" height="5.23" fill="#b6b6b8"/><rect x="16.05" y="5.13" width="5.45" height="5.23" fill="#9a9a9c"/><rect x="21.40" y="5.13" width="5.45" height="5.23" fill="#bbbbbd"/><rect x="26.75" y="5.13" width="5.45" height="5.23" fill="#ababad"/><rect x="32.10" y="5.13" width="5.45" height="5.23" fill="#adadaf"/><rect x="37.45" y="5.13" width="5.45" height="5.23" fill="#b0b0b2"/><rect x="42.80" y="5.13" width="5.45" height="5.23" fill="#b9b9bb"/><rect x="0.00" y="10.26" width="5.45" height="5.23" fill="#e9e9eb"/><rect x="5.35" y="10.26" width="5.45" height="5.23" fill="#d6d6d8"/><rect x="10.70" y="10.26" width="5.45" height="5.23" fill="#dcdcde"/><rect x="16.05" y="10.26" width="5.45" height="5.23" fill="#d2d2d4"/><rect x="21.40" y="10.26" width="5.45" height="5.23" fill="#d2d2d4"/><rect x="26.75" y="10.26" width="5.45" height="5.23" fill="#ebebed"/><rect x="32.10" y="10.26" width="5.45" height="5.23" fill="#d4d4d6"/><rect x="37.45" y="10.26" width="5.45" height="5.23" fill="#d6d6d8"/><rect x="42.80" y="10.26" width="5.45" height="5.23" fill="#e4e4e6"/></svg>
  <div class="t" style="left:626px">123458</div><div class="t" style="left:758px">有効</div>
  <div class="t" style="left:954px">0</div>
  <svg style="left:984px;top:19px" width="14" height="4" viewBox="0 0 14 4" fill="#222"><circle cx="2" cy="2" r="1.3"/><circle cx="7" cy="2" r="1.3"/><circle cx="12" cy="2" r="1.3"/></svg>
</div>
<div class="row" style="top:125.1px">
  <div class="cb" style="left:10px;top:14px"></div>
  <div class="t" style="left:47px">1</div><div class="t" style="left:97px">1年1組</div>
  <svg style="left:230.2px;top:12.6px;filter:blur(.5px)" width="31.8" height="15.4" viewBox="0 0 31.8 15.4"><rect x="0.00" y="0.00" width="5.40" height="5.23" fill="#e1e1e3"/><rect x="5.30" y="0.00" width="5.40" height="5.23" fill="#e2e2e4"/><rect x="10.60" y="0.00" width="5.40" height="5.23" fill="#d3d3d5"/><rect x="15.90" y="0.00" width="5.40" height="5.23" fill="#c7c7c9"/><rect x="21.20" y="0.00" width="5.40" height="5.23" fill="#dddddf"/><rect x="26.50" y="0.00" width="5.40" height="5.23" fill="#f1f1f3"/><rect x="0.00" y="5.13" width="5.40" height="5.23" fill="#9f9fa1"/><rect x="5.30" y="5.13" width="5.40" height="5.23" fill="#939395"/><rect x="10.60" y="5.13" width="5.40" height="5.23" fill="#acacae"/><rect x="15.90" y="5.13" width="5.40" height="5.23" fill="#a8a8aa"/><rect x="21.20" y="5.13" width="5.40" height="5.23" fill="#d0d0d2"/><rect x="26.50" y="5.13" width="5.40" height="5.23" fill="#e0e0e2"/><rect x="0.00" y="10.26" width="5.40" height="5.23" fill="#dfdfe1"/><rect x="5.30" y="10.26" width="5.40" height="5.23" fill="#c0c0c2"/><rect x="10.60" y="10.26" width="5.40" height="5.23" fill="#bcbcbe"/><rect x="15.90" y="10.26" width="5.40" height="5.23" fill="#c6c6c8"/><rect x="21.20" y="10.26" width="5.40" height="5.23" fill="#f1f1f3"/><rect x="26.50" y="10.26" width="5.40" height="5.23" fill="#fdfdfd"/></svg><svg style="left:363.1px;top:12.6px;filter:blur(.5px)" width="54.0" height="15.4" viewBox="0 0 54.0 15.4"><rect x="0.00" y="0.00" width="5.50" height="5.23" fill="#fdfdfd"/><rect x="5.40" y="0.00" width="5.50" height="5.23" fill="#f4f4f6"/><rect x="10.80" y="0.00" width="5.50" height="5.23" fill="#fdfdfd"/><rect x="16.20" y="0.00" width="5.50" height="5.23" fill="#ececee"/><rect x="21.60" y="0.00" width="5.50" height="5.23" fill="#fafafc"/><rect x="27.00" y="0.00" width="5.50" height="5.23" fill="#e9e9eb"/><rect x="32.40" y="0.00" width="5.50" height="5.23" fill="#ececee"/><rect x="37.80" y="0.00" width="5.50" height="5.23" fill="#e5e5e7"/><rect x="43.20" y="0.00" width="5.50" height="5.23" fill="#e7e7e9"/><rect x="48.60" y="0.00" width="5.50" height="5.23" fill="#fdfdfd"/><rect x="0.00" y="5.13" width="5.50" height="5.23" fill="#a5a5a7"/><rect x="5.40" y="5.13" width="5.50" height="5.23" fill="#b5b5b7"/><rect x="10.80" y="5.13" width="5.50" height="5.23" fill="#ccccce"/><rect x="16.20" y="5.13" width="5.50" height="5.23" fill="#c7c7c9"/><rect x="21.60" y="5.13" width="5.50" height="5.23" fill="#c0c0c2"/><rect x="27.00" y="5.13" width="5.50" height="5.23" fill="#a6a6a8"/><rect x="32.40" y="5.13" width="5.50" height="5.23" fill="#dbdbdd"/><rect x="37.80" y="5.13" width="5.50" height="5.23" fill="#a6a6a8"/><rect x="43.20" y="5.13" width="5.50" height="5.23" fill="#d3d3d5"/><rect x="48.60" y="5.13" width="5.50" height="5.23" fill="#ededef"/><rect x="0.00" y="10.26" width="5.50" height="5.23" fill="#eeeef0"/><rect x="5.40" y="10.26" width="5.50" height="5.23" fill="#e0e0e2"/><rect x="10.80" y="10.26" width="5.50" height="5.23" fill="#d0d0d2"/><rect x="16.20" y="10.26" width="5.50" height="5.23" fill="#e6e6e8"/><rect x="21.60" y="10.26" width="5.50" height="5.23" fill="#f2f2f4"/><rect x="27.00" y="10.26" width="5.50" height="5.23" fill="#f5f5f7"/><rect x="32.40" y="10.26" width="5.50" height="5.23" fill="#f7f7f9"/><rect x="37.80" y="10.26" width="5.50" height="5.23" fill="#ebebed"/><rect x="43.20" y="10.26" width="5.50" height="5.23" fill="#d5d5d7"/><rect x="48.60" y="10.26" width="5.50" height="5.23" fill="#fdfdfd"/></svg><svg style="left:491.4px;top:12.6px;filter:blur(.5px)" width="48.1" height="15.4" viewBox="0 0 48.1 15.4"><rect x="0.00" y="0.00" width="5.45" height="5.23" fill="#fdfdfd"/><rect x="5.35" y="0.00" width="5.45" height="5.23" fill="#fafafc"/><rect x="10.70" y="0.00" width="5.45" height="5.23" fill="#e8e8ea"/><rect x="16.05" y="0.00" width="5.45" height="5.23" fill="#eaeaec"/><rect x="21.40" y="0.00" width="5.45" height="5.23" fill="#ebebed"/><rect x="26.75" y="0.00" width="5.45" height="5.23" fill="#e6e6e8"/><rect x="32.10" y="0.00" width="5.45" height="5.23" fill="#f9f9fb"/><rect x="37.45" y="0.00" width="5.45" height="5.23" fill="#f3f3f5"/><rect x="42.80" y="0.00" width="5.45" height="5.23" fill="#eaeaec"/><rect x="0.00" y="5.13" width="5.45" height="5.23" fill="#c9c9cb"/><rect x="5.35" y="5.13" width="5.45" height="5.23" fill="#bcbcbe"/><rect x="10.70" y="5.13" width="5.45" height="5.23" fill="#c3c3c5"/><rect x="16.05" y="5.13" width="5.45" height="5.23" fill="#a8a8aa"/><rect x="21.40" y="5.13" width="5.45" height="5.23" fill="#b4b4b6"/><rect x="26.75" y="5.13" width="5.45" height="5.23" fill="#afafb1"/><rect x="32.10" y="5.13" width="5.45" height="5.23" fill="#b1b1b3"/><rect x="37.45" y="5.13" width="5.45" height="5.23" fill="#a8a8aa"/><rect x="42.80" y="5.13" width="5.45" height="5.23" fill="#b2b2b4"/><rect x="0.00" y="10.26" width="5.45" height="5.23" fill="#e8e8ea"/><rect x="5.35" y="10.26" width="5.45" height="5.23" fill="#d4d4d6"/><rect x="10.70" y="10.26" width="5.45" height="5.23" fill="#e7e7e9"/><rect x="16.05" y="10.26" width="5.45" height="5.23" fill="#ceced0"/><rect x="21.40" y="10.26" width="5.45" height="5.23" fill="#ceced0"/><rect x="26.75" y="10.26" width="5.45" height="5.23" fill="#d6d6d8"/><rect x="32.10" y="10.26" width="5.45" height="5.23" fill="#e8e8ea"/><rect x="37.45" y="10.26" width="5.45" height="5.23" fill="#d7d7d9"/><rect x="42.80" y="10.26" width="5.45" height="5.23" fill="#e4e4e6"/></svg>
  <div class="t" style="left:626px">123459</div><div class="t" style="left:758px">有効</div>
  <div class="t" style="left:954px">0</div>
  <svg style="left:984px;top:19px" width="14" height="4" viewBox="0 0 14 4" fill="#222"><circle cx="2" cy="2" r="1.3"/><circle cx="7" cy="2" r="1.3"/><circle cx="12" cy="2" r="1.3"/></svg>
</div>
<div class="row" style="top:166.8px">
  <div class="cb" style="left:10px;top:14px"></div>
  <div class="t" style="left:47px">1</div><div class="t" style="left:97px">1年1組</div>
  <svg style="left:230.2px;top:12.6px;filter:blur(.5px)" width="31.8" height="15.4" viewBox="0 0 31.8 15.4"><rect x="0.00" y="0.00" width="5.40" height="5.23" fill="#e1e1e3"/><rect x="5.30" y="0.00" width="5.40" height="5.23" fill="#ebebed"/><rect x="10.60" y="0.00" width="5.40" height="5.23" fill="#d6d6d8"/><rect x="15.90" y="0.00" width="5.40" height="5.23" fill="#d2d2d4"/><rect x="21.20" y="0.00" width="5.40" height="5.23" fill="#f3f3f5"/><rect x="26.50" y="0.00" width="5.40" height="5.23" fill="#fdfdfd"/><rect x="0.00" y="5.13" width="5.40" height="5.23" fill="#a8a8aa"/><rect x="5.30" y="5.13" width="5.40" height="5.23" fill="#969698"/><rect x="10.60" y="5.13" width="5.40" height="5.23" fill="#aaaaac"/><rect x="15.90" y="5.13" width="5.40" height="5.23" fill="#a4a4a6"/><rect x="21.20" y="5.13" width="5.40" height="5.23" fill="#dddddf"/><rect x="26.50" y="5.13" width="5.40" height="5.23" fill="#e0e0e2"/><rect x="0.00" y="10.26" width="5.40" height="5.23" fill="#e4e4e6"/><rect x="5.30" y="10.26" width="5.40" height="5.23" fill="#d4d4d6"/><rect x="10.60" y="10.26" width="5.40" height="5.23" fill="#bebec0"/><rect x="15.90" y="10.26" width="5.40" height="5.23" fill="#bcbcbe"/><rect x="21.20" y="10.26" width="5.40" height="5.23" fill="#e5e5e7"/><rect x="26.50" y="10.26" width="5.40" height="5.23" fill="#fbfbfd"/></svg><svg style="left:363.1px;top:12.6px;filter:blur(.5px)" width="54.0" height="15.4" viewBox="0 0 54.0 15.4"><rect x="0.00" y="0.00" width="5.50" height="5.23" fill="#eeeef0"/><rect x="5.40" y="0.00" width="5.50" height="5.23" fill="#f3f3f5"/><rect x="10.80" y="0.00" width="5.50" height="5.23" fill="#ececee"/><rect x="16.20" y="0.00" width="5.50" height="5.23" fill="#efeff1"/><rect x="21.60" y="0.00" width="5.50" height="5.23" fill="#fdfdfd"/><rect x="27.00" y="0.00" width="5.50" height="5.23" fill="#ebebed"/><rect x="32.40" y="0.00" width="5.50" height="5.23" fill="#fbfbfd"/><rect x="37.80" y="0.00" width="5.50" height="5.23" fill="#eeeef0"/><rect x="43.20" y="0.00" width="5.50" height="5.23" fill="#efeff1"/><rect x="48.60" y="0.00" width="5.50" height="5.23" fill="#fdfdfd"/><rect x="0.00" y="5.13" width="5.50" height="5.23" fill="#ababad"/><rect x="5.40" y="5.13" width="5.50" height="5.23" fill="#bcbcbe"/><rect x="10.80" y="5.13" width="5.50" height="5.23" fill="#ccccce"/><rect x="16.20" y="5.13" width="5.50" height="5.23" fill="#bfbfc1"/><rect x="21.60" y="5.13" width="5.50" height="5.23" fill="#b5b5b7"/><rect x="27.00" y="5.13" width="5.50" height="5.23" fill="#a8a8aa"/><rect x="32.40" y="5.13" width="5.50" height="5.23" fill="#e1e1e3"/><rect x="37.80" y="5.13" width="5.50" height="5.23" fill="#b7b7b9"/><rect x="43.20" y="5.13" width="5.50" height="5.23" fill="#c2c2c4"/><rect x="48.60" y="5.13" width="5.50" height="5.23" fill="#f4f4f6"/><rect x="0.00" y="10.26" width="5.50" height="5.23" fill="#e9e9eb"/><rect x="5.40" y="10.26" width="5.50" height="5.23" fill="#f4f4f6"/><rect x="10.80" y="10.26" width="5.50" height="5.23" fill="#d8d8da"/><rect x="16.20" y="10.26" width="5.50" height="5.23" fill="#f9f9fb"/><rect x="21.60" y="10.26" width="5.50" height="5.23" fill="#f2f2f4"/><rect x="27.00" y="10.26" width="5.50" height="5.23" fill="#f3f3f5"/><rect x="32.40" y="10.26" width="5.50" height="5.23" fill="#f3f3f5"/><rect x="37.80" y="10.26" width="5.50" height="5.23" fill="#dedee0"/><rect x="43.20" y="10.26" width="5.50" height="5.23" fill="#e0e0e2"/><rect x="48.60" y="10.26" width="5.50" height="5.23" fill="#fdfdfd"/></svg><svg style="left:491.4px;top:12.6px;filter:blur(.5px)" width="48.1" height="15.4" viewBox="0 0 48.1 15.4"><rect x="0.00" y="0.00" width="5.45" height="5.23" fill="#eeeef0"/><rect x="5.35" y="0.00" width="5.45" height="5.23" fill="#eaeaec"/><rect x="10.70" y="0.00" width="5.45" height="5.23" fill="#f8f8fa"/><rect x="16.05" y="0.00" width="5.45" height="5.23" fill="#ededef"/><rect x="21.40" y="0.00" width="5.45" height="5.23" fill="#f8f8fa"/><rect x="26.75" y="0.00" width="5.45" height="5.23" fill="#eaeaec"/><rect x="32.10" y="0.00" width="5.45" height="5.23" fill="#eaeaec"/><rect x="37.45" y="0.00" width="5.45" height="5.23" fill="#f0f0f2"/><rect x="42.80" y="0.00" width="5.45" height="5.23" fill="#efeff1"/><rect x="0.00" y="5.13" width="5.45" height="5.23" fill="#ceced0"/><rect x="5.35" y="5.13" width="5.45" height="5.23" fill="#c6c6c8"/><rect x="10.70" y="5.13" width="5.45" height="5.23" fill="#bababc"/><rect x="16.05" y="5.13" width="5.45" height="5.23" fill="#9a9a9c"/><rect x="21.40" y="5.13" width="5.45" height="5.23" fill="#b8b8ba"/><rect x="26.75" y="5.13" width="5.45" height="5.23" fill="#ababad"/><rect x="32.10" y="5.13" width="5.45" height="5.23" fill="#a7a7a9"/><rect x="37.45" y="5.13" width="5.45" height="5.23" fill="#9d9d9f"/><rect x="42.80" y="5.13" width="5.45" height="5.23" fill="#bcbcbe"/><rect x="0.00" y="10.26" width="5.45" height="5.23" fill="#d8d8da"/><rect x="5.35" y="10.26" width="5.45" height="5.23" fill="#dcdcde"/><rect x="10.70" y="10.26" width="5.45" height="5.23" fill="#d9d9db"/><rect x="16.05" y="10.26" width="5.45" height="5.23" fill="#cfcfd1"/><rect x="21.40" y="10.26" width="5.45" height="5.23" fill="#dadadc"/><rect x="26.75" y="10.26" width="5.45" height="5.23" fill="#e3e3e5"/><rect x="32.10" y="10.26" width="5.45" height="5.23" fill="#dcdcde"/><rect x="37.45" y="10.26" width="5.45" height="5.23" fill="#dadadc"/><rect x="42.80" y="10.26" width="5.45" height="5.23" fill="#e9e9eb"/></svg>
  <div class="t" style="left:626px">123460</div><div class="t" style="left:758px">有効</div>
  <div class="t" style="left:954px">0</div>
  <svg style="left:984px;top:19px" width="14" height="4" viewBox="0 0 14 4" fill="#222"><circle cx="2" cy="2" r="1.3"/><circle cx="7" cy="2" r="1.3"/><circle cx="12" cy="2" r="1.3"/></svg>
</div>
<div class="row" style="top:208.5px">
  <div class="cb" style="left:10px;top:14px"></div>
  <div class="t" style="left:47px">1</div><div class="t" style="left:97px">1年1組</div>
  <svg style="left:230.2px;top:12.6px;filter:blur(.5px)" width="31.8" height="15.4" viewBox="0 0 31.8 15.4"><rect x="0.00" y="0.00" width="5.40" height="5.23" fill="#e0e0e2"/><rect x="5.30" y="0.00" width="5.40" height="5.23" fill="#e8e8ea"/><rect x="10.60" y="0.00" width="5.40" height="5.23" fill="#dcdcde"/><rect x="15.90" y="0.00" width="5.40" height="5.23" fill="#d5d5d7"/><rect x="21.20" y="0.00" width="5.40" height="5.23" fill="#f1f1f3"/><rect x="26.50" y="0.00" width="5.40" height="5.23" fill="#f6f6f8"/><rect x="0.00" y="5.13" width="5.40" height="5.23" fill="#acacae"/><rect x="5.30" y="5.13" width="5.40" height="5.23" fill="#9b9b9d"/><rect x="10.60" y="5.13" width="5.40" height="5.23" fill="#aaaaac"/><rect x="15.90" y="5.13" width="5.40" height="5.23" fill="#a0a0a2"/><rect x="21.20" y="5.13" width="5.40" height="5.23" fill="#ceced0"/><rect x="26.50" y="5.13" width="5.40" height="5.23" fill="#dfdfe1"/><rect x="0.00" y="10.26" width="5.40" height="5.23" fill="#dcdcde"/><rect x="5.30" y="10.26" width="5.40" height="5.23" fill="#cfcfd1"/><rect x="10.60" y="10.26" width="5.40" height="5.23" fill="#afafb1"/><rect x="15.90" y="10.26" width="5.40" height="5.23" fill="#d1d1d3"/><rect x="21.20" y="10.26" width="5.40" height="5.23" fill="#f2f2f4"/><rect x="26.50" y="10.26" width="5.40" height="5.23" fill="#f0f0f2"/></svg><svg style="left:363.1px;top:12.6px;filter:blur(.5px)" width="54.0" height="15.4" viewBox="0 0 54.0 15.4"><rect x="0.00" y="0.00" width="5.50" height="5.23" fill="#fdfdfd"/><rect x="5.40" y="0.00" width="5.50" height="5.23" fill="#efeff1"/><rect x="10.80" y="0.00" width="5.50" height="5.23" fill="#f5f5f7"/><rect x="16.20" y="0.00" width="5.50" height="5.23" fill="#fcfcfe"/><rect x="21.60" y="0.00" width="5.50" height="5.23" fill="#fafafc"/><rect x="27.00" y="0.00" width="5.50" height="5.23" fill="#e8e8ea"/><rect x="32.40" y="0.00" width="5.50" height="5.23" fill="#fdfdfd"/><rect x="37.80" y="0.00" width="5.50" height="5.23" fill="#dadadc"/><rect x="43.20" y="0.00" width="5.50" height="5.23" fill="#e8e8ea"/><rect x="48.60" y="0.00" width="5.50" height="5.23" fill="#fdfdfd"/><rect x="0.00" y="5.13" width="5.50" height="5.23" fill="#a2a2a4"/><rect x="5.40" y="5.13" width="5.50" height="5.23" fill="#b4b4b6"/><rect x="10.80" y="5.13" width="5.50" height="5.23" fill="#e4e4e6"/><rect x="16.20" y="5.13" width="5.50" height="5.23" fill="#bcbcbe"/><rect x="21.60" y="5.13" width="5.50" height="5.23" fill="#b3b3b5"/><rect x="27.00" y="5.13" width="5.50" height="5.23" fill="#bcbcbe"/><rect x="32.40" y="5.13" width="5.50" height="5.23" fill="#d0d0d2"/><rect x="37.80" y="5.13" width="5.50" height="5.23" fill="#a5a5a7"/><rect x="43.20" y="5.13" width="5.50" height="5.23" fill="#d0d0d2"/><rect x="48.60" y="5.13" width="5.50" height="5.23" fill="#e7e7e9"/><rect x="0.00" y="10.26" width="5.50" height="5.23" fill="#f2f2f4"/><rect x="5.40" y="10.26" width="5.50" height="5.23" fill="#dfdfe1"/><rect x="10.80" y="10.26" width="5.50" height="5.23" fill="#e2e2e4"/><rect x="16.20" y="10.26" width="5.50" height="5.23" fill="#f5f5f7"/><rect x="21.60" y="10.26" width="5.50" height="5.23" fill="#f8f8fa"/><rect x="27.00" y="10.26" width="5.50" height="5.23" fill="#f8f8fa"/><rect x="32.40" y="10.26" width="5.50" height="5.23" fill="#f7f7f9"/><rect x="37.80" y="10.26" width="5.50" height="5.23" fill="#d6d6d8"/><rect x="43.20" y="10.26" width="5.50" height="5.23" fill="#e9e9eb"/><rect x="48.60" y="10.26" width="5.50" height="5.23" fill="#f6f6f8"/></svg><svg style="left:491.4px;top:12.6px;filter:blur(.5px)" width="48.1" height="15.4" viewBox="0 0 48.1 15.4"><rect x="0.00" y="0.00" width="5.45" height="5.23" fill="#ececee"/><rect x="5.35" y="0.00" width="5.45" height="5.23" fill="#f3f3f5"/><rect x="10.70" y="0.00" width="5.45" height="5.23" fill="#ececee"/><rect x="16.05" y="0.00" width="5.45" height="5.23" fill="#e5e5e7"/><rect x="21.40" y="0.00" width="5.45" height="5.23" fill="#f6f6f8"/><rect x="26.75" y="0.00" width="5.45" height="5.23" fill="#e4e4e6"/><rect x="32.10" y="0.00" width="5.45" height="5.23" fill="#fcfcfe"/><rect x="37.45" y="0.00" width="5.45" height="5.23" fill="#f3f3f5"/><rect x="42.80" y="0.00" width="5.45" height="5.23" fill="#f9f9fb"/><rect x="0.00" y="5.13" width="5.45" height="5.23" fill="#d2d2d4"/><rect x="5.35" y="5.13" width="5.45" height="5.23" fill="#bdbdbf"/><rect x="10.70" y="5.13" width="5.45" height="5.23" fill="#b9b9bb"/><rect x="16.05" y="5.13" width="5.45" height="5.23" fill="#9d9d9f"/><rect x="21.40" y="5.13" width="5.45" height="5.23" fill="#bcbcbe"/><rect x="26.75" y="5.13" width="5.45" height="5.23" fill="#b4b4b6"/><rect x="32.10" y="5.13" width="5.45" height="5.23" fill="#a7a7a9"/><rect x="37.45" y="5.13" width="5.45" height="5.23" fill="#adadaf"/><rect x="42.80" y="5.13" width="5.45" height="5.23" fill="#bcbcbe"/><rect x="0.00" y="10.26" width="5.45" height="5.23" fill="#e6e6e8"/><rect x="5.35" y="10.26" width="5.45" height="5.23" fill="#e4e4e6"/><rect x="10.70" y="10.26" width="5.45" height="5.23" fill="#e7e7e9"/><rect x="16.05" y="10.26" width="5.45" height="5.23" fill="#e4e4e6"/><rect x="21.40" y="10.26" width="5.45" height="5.23" fill="#d1d1d3"/><rect x="26.75" y="10.26" width="5.45" height="5.23" fill="#e0e0e2"/><rect x="32.10" y="10.26" width="5.45" height="5.23" fill="#eaeaec"/><rect x="37.45" y="10.26" width="5.45" height="5.23" fill="#dbdbdd"/><rect x="42.80" y="10.26" width="5.45" height="5.23" fill="#dedee0"/></svg>
  <div class="t" style="left:626px">123461</div><div class="t" style="left:758px">有効</div>
  <div class="t" style="left:954px">0</div>
  <svg style="left:984px;top:19px" width="14" height="4" viewBox="0 0 14 4" fill="#222"><circle cx="2" cy="2" r="1.3"/><circle cx="7" cy="2" r="1.3"/><circle cx="12" cy="2" r="1.3"/></svg>
</div>
<div class="row" style="top:250.2px">
  <div class="cb" style="left:10px;top:14px"></div>
  <div class="t" style="left:47px">1</div><div class="t" style="left:97px">1年1組</div>
  <svg style="left:230.2px;top:12.6px;filter:blur(.5px)" width="31.8" height="15.4" viewBox="0 0 31.8 15.4"><rect x="0.00" y="0.00" width="5.40" height="5.23" fill="#e1e1e3"/><rect x="5.30" y="0.00" width="5.40" height="5.23" fill="#ebebed"/><rect x="10.60" y="0.00" width="5.40" height="5.23" fill="#d8d8da"/><rect x="15.90" y="0.00" width="5.40" height="5.23" fill="#cacacc"/><rect x="21.20" y="0.00" width="5.40" height="5.23" fill="#eaeaec"/><rect x="26.50" y="0.00" width="5.40" height="5.23" fill="#fafafc"/><rect x="0.00" y="5.13" width="5.40" height="5.23" fill="#9c9c9e"/><rect x="5.30" y="5.13" width="5.40" height="5.23" fill="#9c9c9e"/><rect x="10.60" y="5.13" width="5.40" height="5.23" fill="#9c9c9e"/><rect x="15.90" y="5.13" width="5.40" height="5.23" fill="#a2a2a4"/><rect x="21.20" y="5.13" width="5.40" height="5.23" fill="#dddddf"/><rect x="26.50" y="5.13" width="5.40" height="5.23" fill="#f0f0f2"/><rect x="0.00" y="10.26" width="5.40" height="5.23" fill="#e8e8ea"/><rect x="5.30" y="10.26" width="5.40" height="5.23" fill="#ccccce"/><rect x="10.60" y="10.26" width="5.40" height="5.23" fill="#b8b8ba"/><rect x="15.90" y="10.26" width="5.40" height="5.23" fill="#cacacc"/><rect x="21.20" y="10.26" width="5.40" height="5.23" fill="#e6e6e8"/><rect x="26.50" y="10.26" width="5.40" height="5.23" fill="#fcfcfe"/></svg><svg style="left:363.1px;top:12.6px;filter:blur(.5px)" width="54.0" height="15.4" viewBox="0 0 54.0 15.4"><rect x="0.00" y="0.00" width="5.50" height="5.23" fill="#f2f2f4"/><rect x="5.40" y="0.00" width="5.50" height="5.23" fill="#e7e7e9"/><rect x="10.80" y="0.00" width="5.50" height="5.23" fill="#fdfdfd"/><rect x="16.20" y="0.00" width="5.50" height="5.23" fill="#fcfcfe"/><rect x="21.60" y="0.00" width="5.50" height="5.23" fill="#fdfdfd"/><rect x="27.00" y="0.00" width="5.50" height="5.23" fill="#ebebed"/><rect x="32.40" y="0.00" width="5.50" height="5.23" fill="#f2f2f4"/><rect x="37.80" y="0.00" width="5.50" height="5.23" fill="#dddddf"/><rect x="43.20" y="0.00" width="5.50" height="5.23" fill="#e8e8ea"/><rect x="48.60" y="0.00" width="5.50" height="5.23" fill="#f2f2f4"/><rect x="0.00" y="5.13" width="5.50" height="5.23" fill="#a5a5a7"/><rect x="5.40" y="5.13" width="5.50" height="5.23" fill="#c5c5c7"/><rect x="10.80" y="5.13" width="5.50" height="5.23" fill="#d6d6d8"/><rect x="16.20" y="5.13" width="5.50" height="5.23" fill="#bcbcbe"/><rect x="21.60" y="5.13" width="5.50" height="5.23" fill="#c2c2c4"/><rect x="27.00" y="5.13" width="5.50" height="5.23" fill="#a4a4a6"/><rect x="32.40" y="5.13" width="5.50" height="5.23" fill="#d7d7d9"/><rect x="37.80" y="5.13" width="5.50" height="5.23" fill="#b4b4b6"/><rect x="43.20" y="5.13" width="5.50" height="5.23" fill="#bebec0"/><rect x="48.60" y="5.13" width="5.50" height="5.23" fill="#e5e5e7"/><rect x="0.00" y="10.26" width="5.50" height="5.23" fill="#f2f2f4"/><rect x="5.40" y="10.26" width="5.50" height="5.23" fill="#e6e6e8"/><rect x="10.80" y="10.26" width="5.50" height="5.23" fill="#dfdfe1"/><rect x="16.20" y="10.26" width="5.50" height="5.23" fill="#f1f1f3"/><rect x="21.60" y="10.26" width="5.50" height="5.23" fill="#fcfcfe"/><rect x="27.00" y="10.26" width="5.50" height="5.23" fill="#ececee"/><rect x="32.40" y="10.26" width="5.50" height="5.23" fill="#fbfbfd"/><rect x="37.80" y="10.26" width="5.50" height="5.23" fill="#d4d4d6"/><rect x="43.20" y="10.26" width="5.50" height="5.23" fill="#dadadc"/><rect x="48.60" y="10.26" width="5.50" height="5.23" fill="#f2f2f4"/></svg><svg style="left:491.4px;top:12.6px;filter:blur(.5px)" width="48.1" height="15.4" viewBox="0 0 48.1 15.4"><rect x="0.00" y="0.00" width="5.45" height="5.23" fill="#f3f3f5"/><rect x="5.35" y="0.00" width="5.45" height="5.23" fill="#e5e5e7"/><rect x="10.70" y="0.00" width="5.45" height="5.23" fill="#e9e9eb"/><rect x="16.05" y="0.00" width="5.45" height="5.23" fill="#f1f1f3"/><rect x="21.40" y="0.00" width="5.45" height="5.23" fill="#eaeaec"/><rect x="26.75" y="0.00" width="5.45" height="5.23" fill="#f9f9fb"/><rect x="32.10" y="0.00" width="5.45" height="5.23" fill="#e8e8ea"/><rect x="37.45" y="0.00" width="5.45" height="5.23" fill="#f3f3f5"/><rect x="42.80" y="0.00" width="5.45" height="5.23" fill="#ececee"/><rect x="0.00" y="5.13" width="5.45" height="5.23" fill="#ccccce"/><rect x="5.35" y="5.13" width="5.45" height="5.23" fill="#d3d3d5"/><rect x="10.70" y="5.13" width="5.45" height="5.23" fill="#c4c4c6"/><rect x="16.05" y="5.13" width="5.45" height="5.23" fill="#ababad"/><rect x="21.40" y="5.13" width="5.45" height="5.23" fill="#cacacc"/><rect x="26.75" y="5.13" width="5.45" height="5.23" fill="#aaaaac"/><rect x="32.10" y="5.13" width="5.45" height="5.23" fill="#ababad"/><rect x="37.45" y="5.13" width="5.45" height="5.23" fill="#aeaeb0"/><rect x="42.80" y="5.13" width="5.45" height="5.23" fill="#bcbcbe"/><rect x="0.00" y="10.26" width="5.45" height="5.23" fill="#d8d8da"/><rect x="5.35" y="10.26" width="5.45" height="5.23" fill="#ececee"/><rect x="10.70" y="10.26" width="5.45" height="5.23" fill="#dbdbdd"/><rect x="16.05" y="10.26" width="5.45" height="5.23" fill="#dadadc"/><rect x="21.40" y="10.26" width="5.45" height="5.23" fill="#dcdcde"/><rect x="26.75" y="10.26" width="5.45" height="5.23" fill="#e5e5e7"/><rect x="32.10" y="10.26" width="5.45" height="5.23" fill="#dddddf"/><rect x="37.45" y="10.26" width="5.45" height="5.23" fill="#ebebed"/><rect x="42.80" y="10.26" width="5.45" height="5.23" fill="#ededef"/></svg>
  <div class="t" style="left:626px">123462</div><div class="t" style="left:758px">有効</div>
  <div class="t" style="left:954px">0</div>
  <svg style="left:984px;top:19px" width="14" height="4" viewBox="0 0 14 4" fill="#222"><circle cx="2" cy="2" r="1.3"/><circle cx="7" cy="2" r="1.3"/><circle cx="12" cy="2" r="1.3"/></svg>
</div>
<div class="row" style="top:291.9px">
  <div class="cb" style="left:10px;top:14px"></div>
  <div class="t" style="left:47px">1</div><div class="t" style="left:97px">1年1組</div>
  <svg style="left:230.2px;top:12.6px;filter:blur(.5px)" width="31.8" height="15.4" viewBox="0 0 31.8 15.4"><rect x="0.00" y="0.00" width="5.40" height="5.23" fill="#e8e8ea"/><rect x="5.30" y="0.00" width="5.40" height="5.23" fill="#d9d9db"/><rect x="10.60" y="0.00" width="5.40" height="5.23" fill="#dcdcde"/><rect x="15.90" y="0.00" width="5.40" height="5.23" fill="#d6d6d8"/><rect x="21.20" y="0.00" width="5.40" height="5.23" fill="#ededef"/><rect x="26.50" y="0.00" width="5.40" height="5.23" fill="#f4f4f6"/><rect x="0.00" y="5.13" width="5.40" height="5.23" fill="#9f9fa1"/><rect x="5.30" y="5.13" width="5.40" height="5.23" fill="#9d9d9f"/><rect x="10.60" y="5.13" width="5.40" height="5.23" fill="#a8a8aa"/><rect x="15.90" y="5.13" width="5.40" height="5.23" fill="#a9a9ab"/><rect x="21.20" y="5.13" width="5.40" height="5.23" fill="#d2d2d4"/><rect x="26.50" y="5.13" width="5.40" height="5.23" fill="#e7e7e9"/><rect x="0.00" y="10.26" width="5.40" height="5.23" fill="#d8d8da"/><rect x="5.30" y="10.26" width="5.40" height="5.23" fill="#cdcdcf"/><rect x="10.60" y="10.26" width="5.40" height="5.23" fill="#bebec0"/><rect x="15.90" y="10.26" width="5.40" height="5.23" fill="#c4c4c6"/><rect x="21.20" y="10.26" width="5.40" height="5.23" fill="#eeeef0"/><rect x="26.50" y="10.26" width="5.40" height="5.23" fill="#f7f7f9"/></svg><svg style="left:363.1px;top:12.6px;filter:blur(.5px)" width="54.0" height="15.4" viewBox="0 0 54.0 15.4"><rect x="0.00" y="0.00" width="5.50" height="5.23" fill="#f2f2f4"/><rect x="5.40" y="0.00" width="5.50" height="5.23" fill="#f1f1f3"/><rect x="10.80" y="0.00" width="5.50" height="5.23" fill="#fdfdfd"/><rect x="16.20" y="0.00" width="5.50" height="5.23" fill="#ebebed"/><rect x="21.60" y="0.00" width="5.50" height="5.23" fill="#f8f8fa"/><rect x="27.00" y="0.00" width="5.50" height="5.23" fill="#e8e8ea"/><rect x="32.40" y="0.00" width="5.50" height="5.23" fill="#fdfdfd"/><rect x="37.80" y="0.00" width="5.50" height="5.23" fill="#e2e2e4"/><rect x="43.20" y="0.00" width="5.50" height="5.23" fill="#dcdcde"/><rect x="48.60" y="0.00" width="5.50" height="5.23" fill="#fdfdfd"/><rect x="0.00" y="5.13" width="5.50" height="5.23" fill="#9d9d9f"/><rect x="5.40" y="5.13" width="5.50" height="5.23" fill="#c4c4c6"/><rect x="10.80" y="5.13" width="5.50" height="5.23" fill="#d8d8da"/><rect x="16.20" y="5.13" width="5.50" height="5.23" fill="#c5c5c7"/><rect x="21.60" y="5.13" width="5.50" height="5.23" fill="#bebec0"/><rect x="27.00" y="5.13" width="5.50" height="5.23" fill="#a7a7a9"/><rect x="32.40" y="5.13" width="5.50" height="5.23" fill="#dbdbdd"/><rect x="37.80" y="5.13" width="5.50" height="5.23" fill="#a6a6a8"/><rect x="43.20" y="5.13" width="5.50" height="5.23" fill="#d2d2d4"/><rect x="48.60" y="5.13" width="5.50" height="5.23" fill="#e9e9eb"/><rect x="0.00" y="10.26" width="5.50" height="5.23" fill="#e6e6e8"/><rect x="5.40" y="10.26" width="5.50" height="5.23" fill="#ededef"/><rect x="10.80" y="10.26" width="5.50" height="5.23" fill="#dcdcde"/><rect x="16.20" y="10.26" width="5.50" height="5.23" fill="#f1f1f3"/><rect x="21.60" y="10.26" width="5.50" height="5.23" fill="#f0f0f2"/><rect x="27.00" y="10.26" width="5.50" height="5.23" fill="#ececee"/><rect x="32.40" y="10.26" width="5.50" height="5.23" fill="#f3f3f5"/><rect x="37.80" y="10.26" width="5.50" height="5.23" fill="#e3e3e5"/><rect x="43.20" y="10.26" width="5.50" height="5.23" fill="#e3e3e5"/><rect x="48.60" y="10.26" width="5.50" height="5.23" fill="#f4f4f6"/></svg><svg style="left:491.4px;top:12.6px;filter:blur(.5px)" width="48.1" height="15.4" viewBox="0 0 48.1 15.4"><rect x="0.00" y="0.00" width="5.45" height="5.23" fill="#f0f0f2"/><rect x="5.35" y="0.00" width="5.45" height="5.23" fill="#f1f1f3"/><rect x="10.70" y="0.00" width="5.45" height="5.23" fill="#f3f3f5"/><rect x="16.05" y="0.00" width="5.45" height="5.23" fill="#f0f0f2"/><rect x="21.40" y="0.00" width="5.45" height="5.23" fill="#eaeaec"/><rect x="26.75" y="0.00" width="5.45" height="5.23" fill="#e7e7e9"/><rect x="32.10" y="0.00" width="5.45" height="5.23" fill="#eaeaec"/><rect x="37.45" y="0.00" width="5.45" height="5.23" fill="#f1f1f3"/><rect x="42.80" y="0.00" width="5.45" height="5.23" fill="#fbfbfd"/><rect x="0.00" y="5.13" width="5.45" height="5.23" fill="#bcbcbe"/><rect x="5.35" y="5.13" width="5.45" height="5.23" fill="#c4c4c6"/><rect x="10.70" y="5.13" width="5.45" height="5.23" fill="#b8b8ba"/><rect x="16.05" y="5.13" width="5.45" height="5.23" fill="#acacae"/><rect x="21.40" y="5.13" width="5.45" height="5.23" fill="#ccccce"/><rect x="26.75" y="5.13" width="5.45" height="5.23" fill="#9c9c9e"/><rect x="32.10" y="5.13" width="5.45" height="5.23" fill="#9d9d9f"/><rect x="37.45" y="5.13" width="5.45" height="5.23" fill="#a2a2a4"/><rect x="42.80" y="5.13" width="5.45" height="5.23" fill="#aaaaac"/><rect x="0.00" y="10.26" width="5.45" height="5.23" fill="#dddddf"/><rect x="5.35" y="10.26" width="5.45" height="5.23" fill="#d4d4d6"/><rect x="10.70" y="10.26" width="5.45" height="5.23" fill="#e9e9eb"/><rect x="16.05" y="10.26" width="5.45" height="5.23" fill="#d5d5d7"/><rect x="21.40" y="10.26" width="5.45" height="5.23" fill="#d6d6d8"/><rect x="26.75" y="10.26" width="5.45" height="5.23" fill="#ebebed"/><rect x="32.10" y="10.26" width="5.45" height="5.23" fill="#dfdfe1"/><rect x="37.45" y="10.26" width="5.45" height="5.23" fill="#dbdbdd"/><rect x="42.80" y="10.26" width="5.45" height="5.23" fill="#efeff1"/></svg>
  <div class="t" style="left:626px">123463</div><div class="t" style="left:758px">有効</div>
  <div class="t" style="left:954px">0</div>
  <svg style="left:984px;top:19px" width="14" height="4" viewBox="0 0 14 4" fill="#222"><circle cx="2" cy="2" r="1.3"/><circle cx="7" cy="2" r="1.3"/><circle cx="12" cy="2" r="1.3"/></svg>
</div>
  </div>
  <!-- scrollbar -->
  <svg style="left:1251px;top:344px" width="7" height="4" viewBox="0 0 7 4" fill="none" stroke="#888" stroke-width="1.2"><path d="M1 3.500 L3.5 1 L6 3.5"/></svg>
  <div class="abs" style="left:1250px;top:351.5px;width:9px;height:14.5px;background:#bdbdbd"></div>
  <svg style="left:1252px;top:648.7px" width="5.5" height="3.2" viewBox="0 0 7 4" fill="#555"><path d="M0 0 H7 L3.5 4 Z"/></svg>
  <!-- fab -->
  <div class="abs" style="left:1219.800px;top:660px;width:47px;height:47px;border-radius:50%;background:#06769e;box-shadow:0 2px 6px rgba(0,0,0,.28)"></div>
  <svg style="left:1236.300px;top:675.8px" width="14" height="14" viewBox="0 0 14 14" fill="none" stroke="#fff" stroke-width="1.7"><path d="M7 1v12M1 7h12"/></svg>
</div>
</body>
</html>
